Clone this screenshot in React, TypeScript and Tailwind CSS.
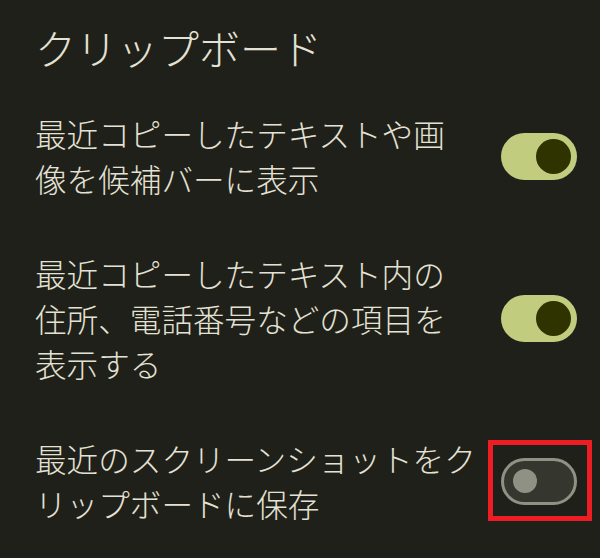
import React from "react";

type Row = { lines: string[]; on: boolean; marked?: boolean };

const rows: Row[] = [
  { lines: ["最近コピーしたテキストや画", "像を候補バーに表示"], on: true },
  {
    lines: ["最近コピーしたテキスト内の", "住所、電話番号などの項目を", "表示する"],
    on: true,
  },
  {
    lines: ["最近のスクリーンショットをク", "リップボードに保存"],
    on: false,
    marked: true,
  },
];

function Toggle({ on }: { on: boolean }) {
  if (on) {
    return (
      <div className="flex h-[47px] w-[76px] shrink-0 items-center justify-end rounded-full bg-[#c2cc7f] pr-[6px]">
        <div className="h-[35px] w-[35px] rounded-full bg-[#2f3300]" />
      </div>
    );
  }
  return (
    <div className="flex h-[47px] w-[76px] shrink-0 items-center rounded-full border-[3px] border-[#8f9184] bg-[#35362e] pl-[9px]">
      <div className="h-[24px] w-[24px] rounded-full bg-[#8f9184]" />
    </div>
  );
}

export default function App() {
  return (
    <div
      className="h-[558px] w-full overflow-hidden bg-[#1f2019] pl-[35px] pr-[23px] text-[#e4e2d5]"
      style={{ fontFamily: '"Noto Sans CJK JP", "Noto Sans", sans-serif' }}
    >
      <h1 className="pt-[23px] text-[41px] leading-[48px] font-light">クリップボード</h1>

      <div className="mt-[40px] flex flex-col gap-[50px]">
        {rows.map((row, i) => (
          <div key={i} className="flex items-center justify-between">
            <p className="text-[31.6px] leading-[45px] font-light whitespace-nowrap">
              {row.lines.map((l, j) => (
                <span key={j} className="block">
                  {l}
                </span>
              ))}
            </p>
            <div className="relative">
              <Toggle on={row.on} />
              {row.marked && (
                <div className="absolute -left-[13px] -top-[18px] h-[81px] w-[104px] border-[5px] border-[#ee1d23]" />
              )}
            </div>
          </div>
        ))}
      </div>
    </div>
  );
}
